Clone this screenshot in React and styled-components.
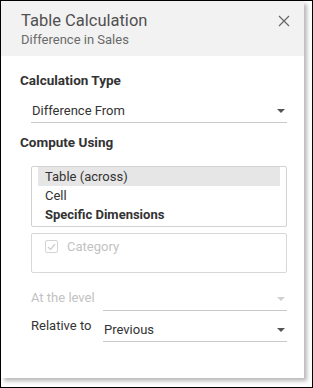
import React from "react";
import styled, { createGlobalStyle } from "styled-components";

const Global = createGlobalStyle`
  html, body {
    margin: 0;
    padding: 0;
    background: #fff;
  }
  body {
    font-family: Roboto, "Liberation Sans", sans-serif;
    font-size: 13px;
    color: #333;
  }
`;

const Frame = styled.div`
  width: 313px;
  height: 388px;
  box-sizing: border-box;
  border: 1px solid #000;
  background: #fff;
`;

const Panel = styled.div`
  width: 303px;
  height: 377px;
  background: #fff;
  box-shadow: 3px 3px 4px rgba(0, 0, 0, 0.28);
  display: flex;
  flex-direction: column;
`;

const Header = styled.div`
  height: 55px;
  box-sizing: border-box;
  background: #f2f2f2;
  padding: 10px 14px 0 20px;
  display: flex;
  justify-content: space-between;
  align-items: flex-start;
`;

const Title = styled.div`
  font-size: 16.5px;
  line-height: 20px;
  color: #505050;
`;

const Subtitle = styled.div`
  font-size: 13px;
  line-height: 17px;
  color: #6a6a6a;
`;

const Close = styled.svg`
  margin-top: 4px;
`;

const Body = styled.div`
  padding: 15px 17px 0 19px;
  display: flex;
  flex-direction: column;
`;

const Label = styled.div`
  font-weight: bold;
  font-size: 13.5px;
  line-height: 18px;
  color: #333;
  margin-top: ${({ $top }) => $top || 0}px;
`;

const Indent = styled.div`
  padding-left: 11px;
`;

const Select = styled.div`
  height: 24px;
  box-sizing: border-box;
  border-bottom: 1px solid #c8c8c8;
  display: flex;
  align-items: center;
  justify-content: space-between;
  padding: 0 1px 0 1px;
  color: ${({ $disabled }) => ($disabled ? "#bdbdbd" : "#333")};
  margin-top: ${({ $top }) => $top || 0}px;
`;

const Arrow = styled.span`
  width: 0;
  height: 0;
  border-left: 4px solid transparent;
  border-right: 4px solid transparent;
  border-top: 4px solid ${({ $disabled }) => ($disabled ? "#d0d0d0" : "#555")};
  margin-right: 1px;
`;

const ListBox = styled.div`
  margin-top: 15px;
  border: 1px solid #d2d2d2;
  border-radius: 2px;
  padding: 0 6px 3px 6px;
  height: 61px;
  box-sizing: border-box;
`;

const Row = styled.div`
  height: 19px;
  line-height: 19px;
  padding-left: 7px;
  background: ${({ $selected }) => ($selected ? "#e6e6e6" : "transparent")};
  font-weight: ${({ $bold }) => ($bold ? "bold" : "normal")};
  color: #333;
`;

const CheckBox = styled.div`
  margin-top: 6px;
  border: 1px solid #d8d8d8;
  border-radius: 2px;
  height: 40px;
  box-sizing: border-box;
  padding: 5px 13px;
`;

const CheckRow = styled.div`
  display: flex;
  align-items: center;
  gap: 9px;
  color: #c2c2c2;
`;

const Box = styled.span`
  width: 13px;
  height: 13px;
  box-sizing: border-box;
  border: 1px solid #d4d4d4;
  border-radius: 2px;
  display: flex;
  align-items: center;
  justify-content: center;
`;

const LevelRow = styled.div`
  display: grid;
  grid-template-columns: 72px 1fr;
  align-items: end;
  margin-top: ${({ $top }) => $top || 0}px;
`;

const RowLabel = styled.div`
  color: ${({ $disabled }) => ($disabled ? "#c2c2c2" : "#333")};
  line-height: 18px;
  padding-bottom: ${({ $pad }) => $pad || 0}px;
`;

const Chevron = ({ disabled }) => <Arrow $disabled={disabled} />;

export default function App() {
  return (
    <>
      <Global />
      <Frame>
        <Panel>
          <Header>
            <div>
              <Title>Table Calculation</Title>
              <Subtitle>Difference in Sales</Subtitle>
            </div>
            <Close width="12" height="12" viewBox="0 0 12 12">
              <path d="M1 1 L11 11 M11 1 L1 11" stroke="#666" strokeWidth="1.2" fill="none" />
            </Close>
          </Header>
          <Body>
            <Label>Calculation Type</Label>
            <Indent>
              <Select $top={10}>
                <span>Difference From</span>
                <Chevron />
              </Select>
            </Indent>
            <Label $top={10}>Compute Using</Label>
            <Indent>
              <ListBox>
                <Row $selected>Table (across)</Row>
                <Row>Cell</Row>
                <Row $bold>Specific Dimensions</Row>
              </ListBox>
              <CheckBox>
                <CheckRow>
                  <Box>
                    <svg width="9" height="8" viewBox="0 0 9 8">
                      <path d="M1 4 L3.5 6.5 L8 1" stroke="#cfcfcf" strokeWidth="1.2" fill="none" />
                    </svg>
                  </Box>
                  <span>Category</span>
                </CheckRow>
              </CheckBox>
              <LevelRow $top={14}>
                <RowLabel $disabled $pad={4}>At the level</RowLabel>
                <Select $disabled>
                  <span></span>
                  <Chevron disabled />
                </Select>
              </LevelRow>
              <LevelRow $top={6}>
                <RowLabel $pad={7}>Relative to</RowLabel>
                <Select>
                  <span>Previous</span>
                  <Chevron />
                </Select>
              </LevelRow>
            </Indent>
          </Body>
        </Panel>
      </Frame>
    </>
  );
}
